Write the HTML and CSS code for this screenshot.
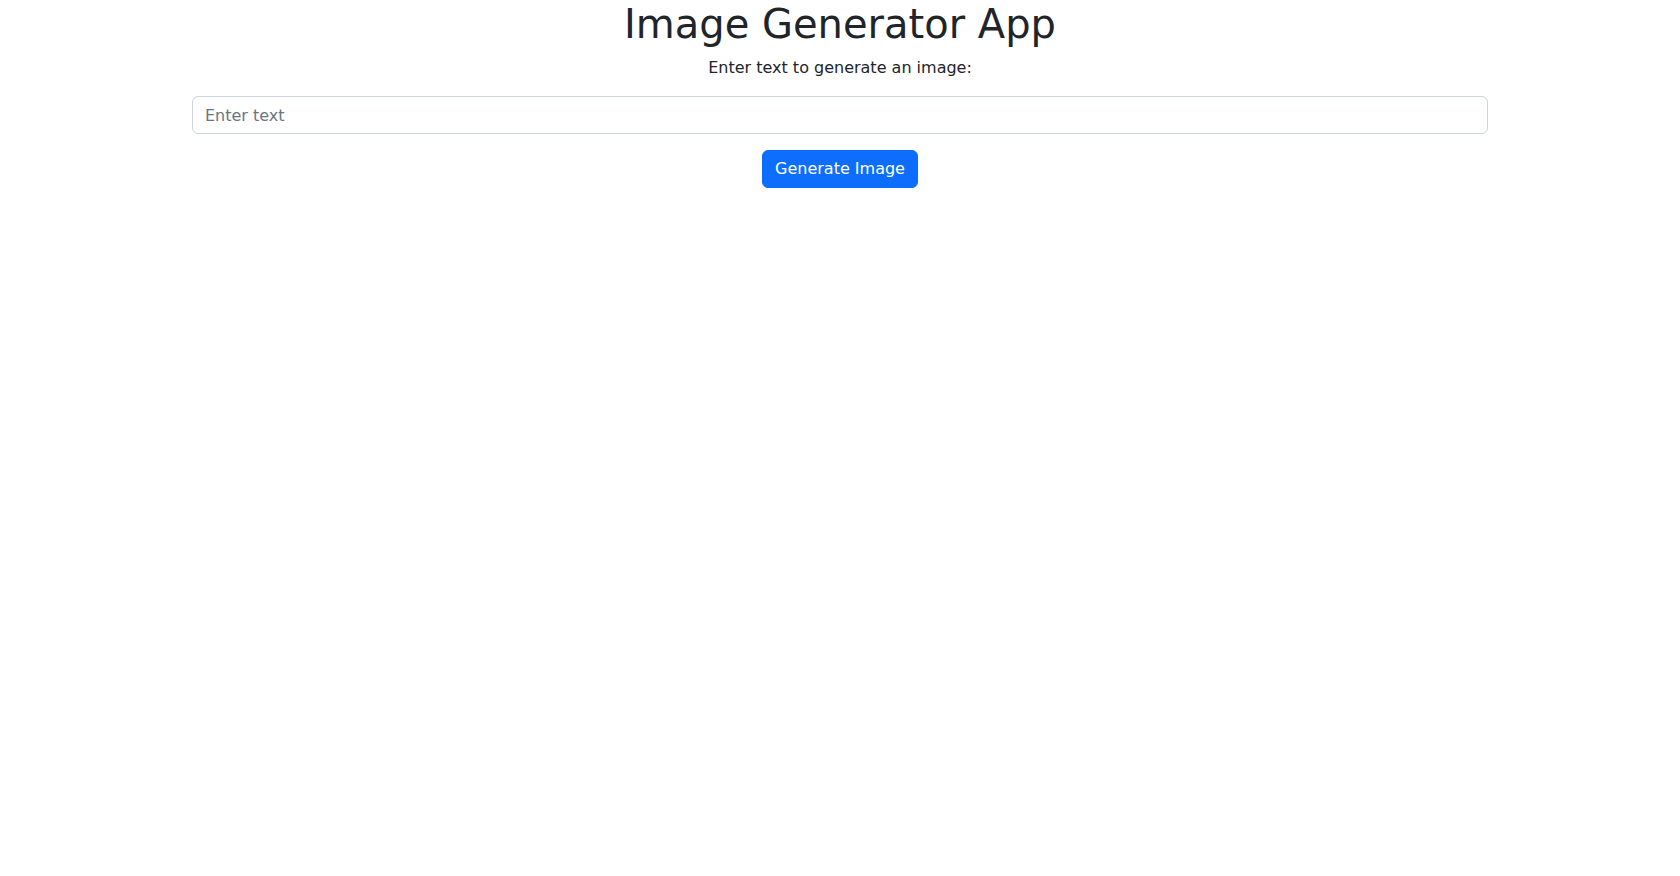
FILE: index.html
```html
<!DOCTYPE html>
<html lang="en">
<head>
    <meta charset="UTF-8">
    <meta name="viewport" content="width=device-width, initial-scale=1.0">
    <title>Image Generator App</title>
    <link rel="stylesheet" href="styles.css">
</head>
<body>
    <div class="container">
        <h1 class="title">Image Generator App</h1>
        <p class="lead-text">Enter text to generate an image:</p>
        <input type="text" class="text-input" placeholder="Enter text">
        <button type="button" class="btn-generate">Generate Image</button>
        <div class="result"></div>
    </div>
</body>
</html>
```

FILE: styles.css
```css
* {box-sizing: border-box;}
body {
    margin: 0;
    font-family: "DejaVu Sans", sans-serif;
    font-size: 16px; line-height: 1.5;
    color: #212529; background: #fff;
}
.container {
    max-width: 1320px; margin: 0 auto;
    padding: 0 12px;
    text-align: center;
}
.title {
    margin: 0 0 8px;
    font-size: 40px; font-weight: 500; line-height: 1.2;
}
.lead-text {margin: 0 0 16px;}
.text-input {
    display: block; width: 100%; height: 38px;
    padding: 6px 12px;
    font-family: inherit; font-size: 16px; line-height: 1.5;
    color: #212529; background: #fff;
    border: 1px solid #ced4da; border-radius: 6px;
    margin-bottom: 16px;
}
.text-input::placeholder {color: #6c757d;}
.btn-generate {
    display: inline-block; height: 38px;
    padding: 6px 12px;
    font-family: inherit; font-size: 16px; line-height: 1.5;
    color: #fff; background: #0d6efd;
    border: 1px solid #0d6efd; border-radius: 6px;
    cursor: pointer;
}
```
